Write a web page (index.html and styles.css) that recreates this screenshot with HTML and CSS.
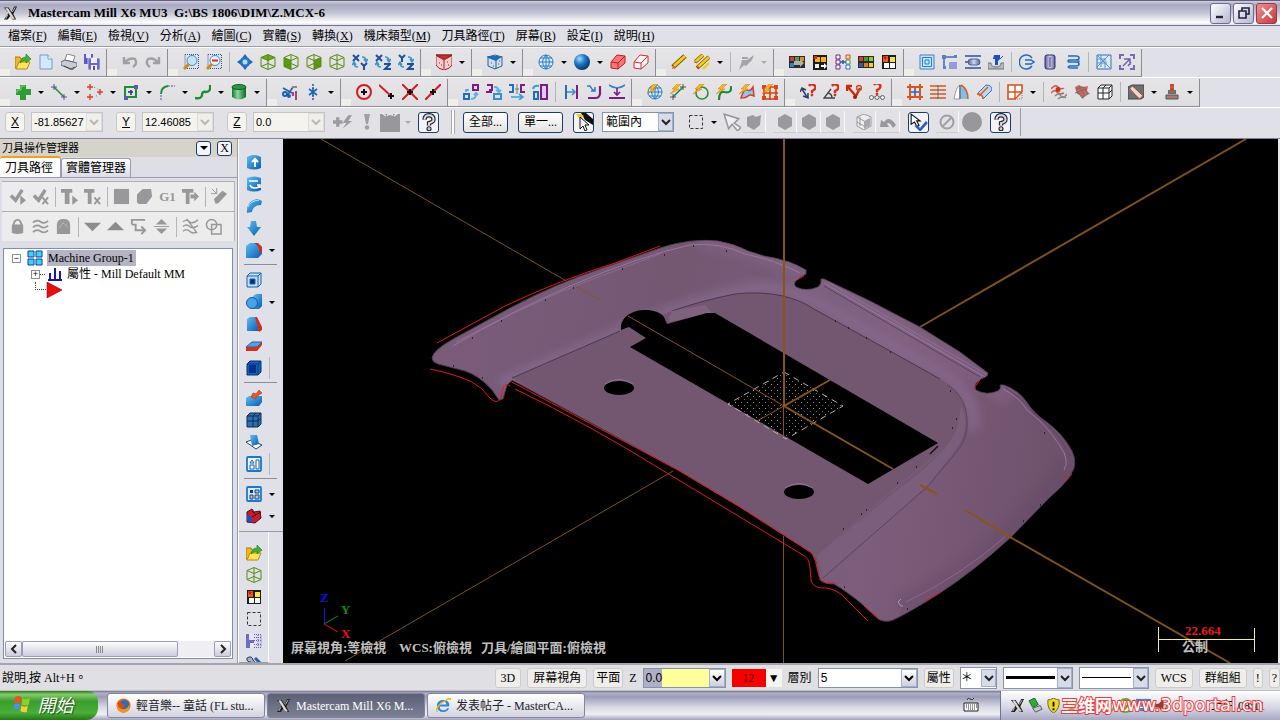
FILE: index.html
```html
<!DOCTYPE html>
<html lang="zh-Hant">
<head>
  <meta charset="UTF-8" />
  <title>Mastercam Mill X6 MU3</title>
  <link rel="stylesheet" href="styles.css">
</head>
<body>
  <!-- Icon sprite -->
  <svg class="sprite" width="0" height="0" aria-hidden="true">
    <defs>
      <linearGradient id="gBlue" x1="0" y1="0" x2="1" y2="1"><stop offset="0" stop-color="#5cc0f4"/><stop offset="1" stop-color="#0a5ab0"/></linearGradient>
      <linearGradient id="gGreen" x1="0" y1="0" x2="1" y2="0"><stop offset="0" stop-color="#127a2c"/><stop offset=".4" stop-color="#8fd4a0"/><stop offset="1" stop-color="#0c6a24"/></linearGradient>
      <radialGradient id="gBall" cx=".35" cy=".3" r=".7"><stop offset="0" stop-color="#a8d8ff"/><stop offset=".5" stop-color="#1e78c8"/><stop offset="1" stop-color="#06386e"/></radialGradient>
      <linearGradient id="gMauve" x1="0" y1="0" x2="1" y2="0"><stop offset="0" stop-color="#5a5a96"/><stop offset=".5" stop-color="#d4d4f0"/><stop offset="1" stop-color="#5a5a96"/></linearGradient>
    </defs>
    <symbol id="logo" viewBox="0 0 16 16"><path d="M1 2h5l3 5 3-6h3l-4 8 3 6h-4l-2-4-3 4H1l5-7z" fill="#1c1c1c"/><path d="M3 3h2l7 11h-2zM13 2l-3 5M5 10l-2 4" stroke="#c8c8b4" stroke-width="1" fill="#eee"/></symbol>
    <symbol id="open" viewBox="0 0 16 16"><path d="M0 3h5l1 2h6v9H0z" fill="#f0b820" stroke="#a87808"/><path d="M1 15l3-7h11l-3 7z" fill="#ffe45c" stroke="#b88a10"/><path d="M5 9q1-6 6-6V0l5 5-5 4V6Q8 6 5 9z" fill="#3cb43c" stroke="#187818" stroke-width=".6"/></symbol>
    <symbol id="new" viewBox="0 0 16 16"><path d="M2 1h8l4 4v10H2z" fill="#d4e8fc" stroke="#6c9cd4"/><path d="M10 1v4h4" fill="#fff" stroke="#6c9cd4"/></symbol>
    <symbol id="print" viewBox="0 0 16 16"><path d="M6 0l8 2-2 6-8-2z" fill="#fff" stroke="#888"/><path d="M0 8l4-2 12 3v3l-5 4-11-5z" fill="#c8ccd4" stroke="#667"/><path d="M3 12l7 3 4-2" stroke="#445" fill="none"/></symbol>
    <symbol id="saveall" viewBox="0 0 16 16"><path d="M0 0h9v10H0z" fill="#5c5cc0"/><path d="M2 0h5v4H2z" fill="#e8e8ff"/><path d="M4 4h12v12H4z" fill="#6a6acc" stroke="#e4e4f4" stroke-width=".7"/><path d="M7 4h6v5H7zM7 11h6v5H7z" fill="#f0f0ff"/><path d="M9 12h2v4H9z" fill="#5050a8"/></symbol>
    <symbol id="undo" viewBox="0 0 16 16"><path d="M2 3v6h6M3 8q5-5 10-3 3 5-2 8" fill="none" stroke="#a0a0a4" stroke-width="2.400"/></symbol>
    <symbol id="redo" viewBox="0 0 16 16"><path d="M14 3v6H8M13 8Q8 3 3 5q-3 5 2 8" fill="none" stroke="#a0a0a4" stroke-width="2.400"/></symbol>
    <symbol id="zoomwin" viewBox="0 0 16 16"><path d="M2 .5h13.500v14H2z" fill="none" stroke="#3050a0" stroke-dasharray="1 1"/><circle cx="9" cy="6.500" r="5" fill="#bfe4fa" stroke="#4a86c0"/><path d="M6 10l-5 5" stroke="#d08c10" stroke-width="3"/></symbol>
    <symbol id="zoomout" viewBox="0 0 16 16"><path d="M2 .5h13.500v14H2z" fill="none" stroke="#3050a0" stroke-dasharray="1 1"/><circle cx="9" cy="6.500" r="5" fill="#e4f0fa" stroke="#4a86c0"/><path d="M6 6.500h6" stroke="#e03010" stroke-width="2"/><path d="M6 10l-5 5" stroke="#d08c10" stroke-width="3"/></symbol>
    <symbol id="fit" viewBox="0 0 16 16"><path d="M8 0l3 4H5zM8 16l3-4H5zM0 8l4-3v6zM16 8l-4-3v6z" fill="#2468b8"/><path d="M4 4h8v8H4z" fill="#2a74c4"/><circle cx="8" cy="8" r="2.500" fill="#a8dcff"/></symbol>
    <symbol id="cube" viewBox="0 0 16 16"><path d="M8 .5l7 3v9l-7 3-7-3v-9zM1 3.500l7 3 7-3M8 6.500v9M8 1v6M1 12.500l7-3 7 3" fill="none" stroke="#5a8a14"/></symbol>
    <symbol id="cubetop" viewBox="0 0 16 16"><path d="M8 .5l7 3-7 3-7-3z" fill="#6aa81c"/><use href="#cube"/></symbol>
    <symbol id="cubefront" viewBox="0 0 16 16"><path d="M1 3.500l7 3v9l-7-3z" fill="#5a9a18"/><use href="#cube"/></symbol>
    <symbol id="cuberight" viewBox="0 0 16 16"><path d="M15 3.500l-7 3v9l7-3z" fill="#5a9a18"/><use href="#cube"/></symbol>
    <symbol id="axes" viewBox="0 0 16 16"><path d="M10 3q4 0 4 4M6 13q-4 0-4-4M12 5l2 3 2-3M0 11l2-3 2 3" fill="none" stroke="#3a94d4" stroke-width="1.500"/></symbol>
    <symbol id="xy" viewBox="0 0 16 16"><use href="#axes"/><path d="M1 1l6 6M7 1L1 7M9 9l3 3 3-3M12 12v4" stroke="#1c50a0" stroke-width="2" fill="none"/></symbol>
    <symbol id="xz" viewBox="0 0 16 16"><use href="#axes"/><path d="M1 1l6 6M7 1L1 7M9 10h6l-5 5h6" stroke="#1c50a0" stroke-width="2" fill="none"/></symbol>
    <symbol id="yz" viewBox="0 0 16 16"><use href="#axes"/><path d="M1 1l3 3 3-3M4 4v4M9 10h6l-5 5h6" stroke="#1c50a0" stroke-width="2" fill="none"/></symbol>
    <symbol id="redcube" viewBox="0 0 16 16"><path d="M0 1h16v10q-2 4-8 5-6-1-8-5z" fill="#f8cccc" stroke="#a02020"/><path d="M0 1h16l-8 4z" fill="#d42c2c" stroke="#8c1c1c"/><path d="M1 2l7 4 7-4M8 6v9M3 9h1M5 11h1M11 8h1M12 11h1" fill="none" stroke="#a02020"/></symbol>
    <symbol id="bluecube" viewBox="0 0 16 16"><path d="M1 3l7-2 7 2v9l-7 3-7-3z" fill="#cddff4" stroke="#345a8c"/><path d="M0 2h7l9 0-7 5-8-3z" fill="#1e6cb4"/><path d="M9 6v9M4 9h1M6 12h1M11 10h1M12 7h1" stroke="#345a8c"/></symbol>
    <symbol id="globe" viewBox="0 0 16 16"><circle cx="8" cy="8" r="7" fill="#d8ecfc" stroke="#2c7cc4"/><path d="M8 1v14M1 8h14M2 4h12M2 12h12M8 1Q1 8 8 15M8 1q7 7 0 14" fill="none" stroke="#2c7cc4"/></symbol>
    <symbol id="ball" viewBox="0 0 16 16"><circle cx="8" cy="8" r="8" fill="url(#gBall)"/></symbol>
    <symbol id="redsolid" viewBox="0 0 16 16"><path d="M1 8l6-7 8 1v7l-7 6-7-1zM1 8l7 1v6M8 9l7-7" fill="#f47878" stroke="#c01c1c"/></symbol>
    <symbol id="redwire" viewBox="0 0 16 16"><path d="M1 8l6-7 8 1v7l-7 6-7-1zM1 8l7 1v6M8 9l7-7" fill="#fff4f4" stroke="#d42c2c"/></symbol>
    <symbol id="pencil" viewBox="0 0 16 16"><path d="M2 13L14 2" stroke="#7c5c04" stroke-width="5"/><path d="M3 12L14 2" stroke="#f4cc1c" stroke-width="3"/><path d="M1 15l1-4 3 3z" fill="#e06848"/></symbol>
    <symbol id="pencils" viewBox="0 0 16 16"><path d="M1 8l8-7M3 14L15 3" stroke="#7c5c04" stroke-width="4"/><path d="M1 8l8-7M4 13L15 3M9 15l6-6" stroke="#f4cc1c" stroke-width="2.400"/><path d="M0 9l2-2 1 2zM3 15l1-3 2 2z" fill="#d84830"/></symbol>
    <symbol id="greytool" viewBox="0 0 16 16"><path d="M1 16l2-6 1-4h5l7-5-2 5-6 6-2-1z" fill="#a4a4a8"/><path d="M4 4h6" stroke="#a4a4a8" stroke-width="2"/></symbol>
    <symbol id="sw1" viewBox="0 0 16 16"><path d="M0 2h16v12H0z" fill="#2c2c2c"/><path d="M1 3h4v4H1z" fill="#d03c3c"/><path d="M6 3h4v4H6z" fill="#50a050"/><path d="M11 3h4v4h-4z" fill="#dc8c1c"/><path d="M1 9h4v4H1z" fill="#3080d0"/><path d="M5 7h6V5l4 4-4 4v-2H5z" fill="#b0b0a8"/></symbol>
    <symbol id="sw2" viewBox="0 0 16 16"><path d="M1 1h14v15H1z" fill="#1c1c1c"/><path d="M3 3h5v5H3zM9 3h5v5H9z" fill="#f4b41c"/><path d="M3 10h4v4H3z" fill="#f4f0e0"/><path d="M9 11h3V9l3 3-3 3v-2H9z" fill="#fff"/><path d="M2 2h3v3H2z" fill="#d82c1c"/></symbol>
    <symbol id="swap" viewBox="0 0 16 16"><path d="M1 1h4v4H1zM1 6h4v4H1zM1 11h4v4H1z" fill="#fff" stroke="#7c1c8c"/><path d="M11 1h4v4h-4z" fill="#f8dca0" stroke="#d04c1c"/><path d="M11 6h4v4h-4z" fill="#fff" stroke="#3c9c3c"/><path d="M11 11h4v4h-4z" fill="#fff" stroke="#2c6cc4"/><path d="M5 8h6M8 6v4" stroke="#1c60c0" stroke-width="1.500"/></symbol>
    <symbol id="sw3" viewBox="0 0 16 16"><path d="M0 2h16v12H0z" fill="#2c2c1c"/><path d="M1 3h4v4H1z" fill="#d83c2c"/><path d="M6 3h4v4H6z" fill="#3c9c3c"/><path d="M11 3h4v4h-4z" fill="#90c840"/><path d="M1 9h4v4H1z" fill="#3058c0"/><path d="M6 9h4v4H6z" fill="#e0801c"/><path d="M11 9h4v4h-4z" fill="#f0cc2c"/></symbol>
    <symbol id="sw4" viewBox="0 0 16 16"><path d="M1 1h14v14H1z" fill="#1c1c1c"/><path d="M9 3h5v5H9z" fill="#fce43c"/><path d="M3 9h5v5H3zM9 9h5v5H9z" fill="#fff"/><path d="M2 2h5v6H2z" fill="#e85c1c"/><path d="M2 2l4 1-2 3z" fill="#d01010"/></symbol>
    <symbol id="nest" viewBox="0 0 16 16"><path d="M1 1h14v14H1z" fill="#cce4fa" stroke="#4878c8"/><path d="M3.500 3.500h9v9h-9zM6 6h4v4H6z" fill="none" stroke="#1484d4"/></symbol>
    <symbol id="step" viewBox="0 0 16 16"><path d="M2 14V3h12" fill="none" stroke="#4c64c0" stroke-width="1.500"/><path d="M7 8h8v7H7z" fill="#9898dc"/><path d="M0 1h4v4H0zM12 1h3v3h-3zM1 12h3v3H1z" fill="#5c80c8"/></symbol>
    <symbol id="slotm" viewBox="0 0 16 16"><path d="M0 2h16M0 14h16M0 8h5" stroke="#2454a4" stroke-width="1.500"/><rect x="3" y="5" width="12" height="6" rx="3" fill="url(#gMauve)" stroke="#4464a4"/></symbol>
    <symbol id="drillm" viewBox="0 0 16 16"><path d="M0 9h3q0 4 5 4t5-4h3v6H0z" fill="#b8b8c0" stroke="#70707c"/><path d="M6 1h6v4l-2 2v4H7V5H5z" fill="#1c50c0"/><path d="M12 5l3-3" stroke="#1c50c0"/></symbol>
    <symbol id="circm" viewBox="0 0 16 16"><path d="M13 4a7 7 0 1 0 0 8M6 6h6l3 2-3 2H6" fill="none" stroke="#1c6cc8" stroke-width="1.500"/></symbol>
    <symbol id="cylm" viewBox="0 0 16 16"><rect x="3" y="1" width="10" height="14" rx="2" fill="url(#gMauve)" stroke="#303070"/><path d="M8 3v10" stroke="#40407c"/></symbol>
    <symbol id="helix" viewBox="0 0 16 16"><path d="M3 2h8q3 0 3 2t-3 2H4q-2 1 0 2h7q3 0 3 2t-3 2H4M4 6h7q3 0 3 2M4 12q-2 2 2 2h7" fill="none" stroke="#1c6cc8" stroke-width="1.600"/></symbol>
    <symbol id="netm" viewBox="0 0 16 16"><path d="M1 1h14v14H1z" fill="#d8ecfc" stroke="#2c74c0"/><path d="M1 1l14 14M1 5h8M1 9h10M5 1v12M9 5v9M1 13L13 1" stroke="#5c90cc" fill="none"/></symbol>
    <symbol id="expand" viewBox="0 0 16 16"><path d="M1 5V1h4M11 1h4v4M15 11v4h-4M5 15H1v-4" stroke="#7868c0" stroke-width="2" fill="none"/><path d="M5 5h6v6M4 12l7-7M9 12l3-4" stroke="#6c60b4" fill="none" stroke-width="1.400"/></symbol>

    <symbol id="plus" viewBox="0 0 16 16"><path d="M5 1h6v4h5v6h-5v5H5v-5H1V5h4z" fill="#2c9c34"/><path d="M6 2h4M6 2v4H2v3" stroke="#84d484" fill="none"/></symbol>
    <symbol id="line" viewBox="0 0 16 16"><path d="M3 3l10 10" stroke="#1c8c34" stroke-width="1.500"/><path d="M0 3h6M3 0v6M10 13h6M13 10v6" stroke="#5454a0"/></symbol>
    <symbol id="arc" viewBox="0 0 16 16"><path d="M3 3q9 0 9 5t-9 5" fill="none" stroke="#2c9c44" stroke-dasharray="1 3"/><path d="M0 3h6M3 0v6M10 8h6M13 5v6M0 13h6M3 10v6" stroke="#e03c2c" stroke-width="1.400"/></symbol>
    <symbol id="rect" viewBox="0 0 16 16"><path d="M2 3h11v10H2z" fill="none" stroke="#189030" stroke-width="2"/><path d="M11 1h4v4h-4zM1 12h4v4H1z" fill="#5c5cac"/><path d="M5 8h5M8 6v5" stroke="#30306c" stroke-width="1.500"/></symbol>
    <symbol id="fillet" viewBox="0 0 16 16"><path d="M2 16v-6" stroke="#5454a0" stroke-dasharray="2 1"/><path d="M2 10Q2 3 9 2" fill="none" stroke="#189030" stroke-width="2"/><path d="M9 2h7" stroke="#5454a0" stroke-dasharray="2 1"/></symbol>
    <symbol id="spline" viewBox="0 0 16 16"><path d="M0 14q7 1 7-3t4-3q5 0 4-7" fill="none" stroke="#189030" stroke-width="2.400"/></symbol>
    <symbol id="cyl" viewBox="0 0 16 16"><path d="M1 3h14v10q-7 5-14 0z" fill="url(#gGreen)"/><ellipse cx="8" cy="3" rx="7" ry="2.500" fill="#289844" stroke="#0c6020"/></symbol>
    <symbol id="trim" viewBox="0 0 16 16"><path d="M1 4l9 5M5 12l6-9" stroke="#1c60b4" stroke-width="1.600"/><circle cx="3" cy="10" r="2" fill="none" stroke="#1c60b4" stroke-width="2"/><circle cx="7" cy="12" r="2" fill="#1c60b4"/><path d="M10 3h5" stroke="#888" stroke-width="2"/><path d="M14 7v9M11 8v4" stroke="#8c2060" stroke-width="1.600"/></symbol>
    <symbol id="break" viewBox="0 0 16 16"><path d="M8 0v5M8 11v5" stroke="#4454b0" stroke-dasharray="2 1" stroke-width="1.600"/><path d="M8 4v8M4 5l8 6M12 5l-8 6" stroke="#1c64bc" stroke-width="1.600"/></symbol>
    <symbol id="snapc" viewBox="0 0 16 16"><circle cx="8" cy="8" r="7" fill="none" stroke="#d01c24" stroke-width="2"/><path d="M8 5v6M5 8h6" stroke="#111" stroke-width="2"/></symbol>
    <symbol id="snape" viewBox="0 0 16 16"><path d="M0 1l12 11" stroke="#d01c24" stroke-width="2"/><path d="M12 9v6M9 12h6" stroke="#111" stroke-width="2"/></symbol>
    <symbol id="snapx" viewBox="0 0 16 16"><path d="M0 0l16 16M16 0L0 16" stroke="#d01c24" stroke-width="2"/><path d="M8 5v6M5 8h6" stroke="#111" stroke-width="2"/></symbol>
    <symbol id="snapm" viewBox="0 0 16 16"><path d="M16 0L0 16" stroke="#d01c24" stroke-width="2"/><path d="M8 5v6M5 8h6" stroke="#111" stroke-width="2"/></symbol>
    <symbol id="xf1" viewBox="0 0 16 16"><path d="M10 1h5v5h-5z" fill="none" stroke="#7c1c84" stroke-width="2"/><path d="M1 10h5v5H1z" fill="none" stroke="#1c70c4" stroke-width="2"/><path d="M8 15q5 0 5-5M11 11l2-2 2 2M6 6H3v2" stroke="#58b0e8" stroke-width="1.800" fill="none"/></symbol>
    <symbol id="xf2" viewBox="0 0 16 16"><path d="M1 1h5v5H3M0 8h6" fill="none" stroke="#7c1c84" stroke-width="2"/><path d="M8 10h7v5H8z" fill="none" stroke="#3c8cd0" stroke-width="2"/><path d="M8 3q5 0 5 5M10 6l3 2 2-2" stroke="#58b0e8" stroke-width="1.800" fill="none"/></symbol>
    <symbol id="xf3" viewBox="0 0 16 16"><path d="M0 1h4v7H0" fill="none" stroke="#1c70c4" stroke-width="2"/><path d="M16 1h-4v7h4" fill="none" stroke="#7c1c84" stroke-width="2"/><path d="M8 0v10M6 5h4" stroke="#777"/><path d="M2 13h11M10 10l4 3-4 3" stroke="#3c9ce0" stroke-width="1.600" fill="none"/></symbol>
    <symbol id="xf4" viewBox="0 0 16 16"><path d="M9 1h6v14H9z" fill="#e4c8f0" stroke="#7c1c84" stroke-width="2"/><path d="M2 8h4v7H2z" fill="none" stroke="#1c70c4" stroke-width="2"/><path d="M1 5q1-4 6-3" stroke="#3c9ce0" stroke-width="2" fill="none"/></symbol>
    <symbol id="xf5" viewBox="0 0 16 16"><path d="M3 1v14" stroke="#1c70c4" stroke-width="2"/><path d="M14 1v14" stroke="#7c1c84" stroke-width="2"/><path d="M4 8h8M9 5l3 3-3 3" stroke="#3c8cd0" fill="none" stroke-width="1.500"/></symbol>
    <symbol id="xf6" viewBox="0 0 16 16"><path d="M1 2h3q2 4 5 5M9 3v4H5" stroke="#2c80cc" stroke-width="1.500" fill="none"/><path d="M14 2v8q-1 4-4 4H2" stroke="#7c1c84" stroke-width="2.200" fill="none"/></symbol>
    <symbol id="xf7" viewBox="0 0 16 16"><path d="M0 1q8 6 16 0" fill="none" stroke="#2c80cc" stroke-width="1.600"/><path d="M8 4v6M5 8l3 3 3-3" stroke="#7c1c84" stroke-width="1.600" fill="none"/><path d="M0 14h16" stroke="#7c1c84" stroke-width="2"/></symbol>
    <symbol id="bolt" viewBox="0 0 16 16"><path d="M7 0L2 5h3L0 10l9-5H6l5-5z" fill="#f8b41c" stroke="#d0780c" stroke-width=".5"/></symbol>
    <symbol id="dgl" viewBox="0 0 16 16"><use href="#globe"/><use href="#bolt"/></symbol>
    <symbol id="dln" viewBox="0 0 16 16"><path d="M3 13L13 3" stroke="#1c8c34" stroke-width="1.600"/><path d="M10 3h6M13 0v6M0 13h6M3 10v6" stroke="#555"/><use href="#bolt"/></symbol>
    <symbol id="dci" viewBox="0 0 16 16"><circle cx="9" cy="9" r="6" fill="none" stroke="#2c8c3c" stroke-width="1.600"/><use href="#bolt"/></symbol>
    <symbol id="dsp" viewBox="0 0 16 16"><path d="M3 16q0-9 5-8 8 2 7-6" fill="none" stroke="#1c8c34" stroke-width="2.200"/><use href="#bolt"/></symbol>
    <symbol id="dsu" viewBox="0 0 16 16"><path d="M2 14q3-10 6-8t6-3l1 9q-4-2-6 0t-7 2z" fill="#8cc8f0" stroke="#d0402c" stroke-width="1.500"/><use href="#bolt"/></symbol>
    <symbol id="dgr" viewBox="0 0 16 16"><path d="M2 3h12v12H2zM8 2v14M1 9h15" fill="#f8e0d0" stroke="#d0401c" stroke-width="1.600"/><path d="M0 1h4v4H0zM12 1h4v4h-4zM0 12h4v4H0zM12 12h4v4h-4z" fill="#d8481c"/><use href="#bolt"/></symbol>
    <symbol id="q" viewBox="0 0 16 16"><path d="M7 3q2-3 5-1t0 5l-2 1v2" fill="none" stroke="#d83018" stroke-width="2.400"/><circle cx="10" cy="12" r="1.400" fill="#d83018"/></symbol>
    <symbol id="q1" viewBox="0 0 16 16"><path d="M2 5l5 8M0 8l2-4 4 2M3 12l5 2V9" stroke="#2c4068" stroke-width="1.500" fill="none"/><use href="#q" x="2" y="-1"/></symbol>
    <symbol id="q2" viewBox="0 0 16 16"><path d="M8 5l-7 9h11M5 9q4 1 4 5" stroke="#444" stroke-width="1.400" fill="none"/><use href="#q" x="2" y="-1"/></symbol>
    <symbol id="q3" viewBox="0 0 16 16"><path d="M1 7V2h5M1 2l8 9M9 14L14 4" stroke="#c82c10" stroke-width="2.400" fill="none"/><circle cx="9" cy="13" r="2" fill="#a81c08"/><circle cx="13" cy="4" r="2.400" fill="none" stroke="#d84824" stroke-width="1.500"/></symbol>
    <symbol id="q4" viewBox="0 0 16 16"><use href="#q" x="-2" y="-2"/><path d="M3 13h10" stroke="#777"/><circle cx="2.500" cy="13.500" r="2" fill="#eee" stroke="#666"/><circle cx="8" cy="13.500" r="2" fill="#eee" stroke="#666"/><circle cx="13.500" cy="13.500" r="2" fill="#eee" stroke="#666"/></symbol>
    <symbol id="og1" viewBox="0 0 16 16"><path d="M8 3v10M3 8h10" stroke="#3464b4" stroke-width="1.600"/><path d="M3 0v16M13 0v16M0 3h16M0 13h16" stroke="#dc541c" stroke-width="2"/></symbol>
    <symbol id="og2" viewBox="0 0 16 16"><path d="M0 2h16M0 6h16M0 10h16M0 14h16" stroke="#dc541c" stroke-width="1.600"/><path d="M8 1v14" stroke="#666"/></symbol>
    <symbol id="og3" viewBox="0 0 16 16"><path d="M1 15Q3 3 7 1v14z" fill="#fff" stroke="#999"/><path d="M8 1q7 4 7 14H8z" fill="#7cc0ec"/><path d="M8 1q7 4 7 14" fill="none" stroke="#e05c1c" stroke-width="1.500"/><path d="M7 1v14" stroke="#444"/></symbol>
    <symbol id="og4" viewBox="0 0 16 16"><path d="M1 10l9-9q6 0 6 5l-9 9q0-5-6-5z" fill="#b8d8f4" stroke="#3c70b0"/><path d="M1 10q6 0 6 5M3 12l9-9" fill="none" stroke="#e05c1c" stroke-width="1.500"/></symbol>
    <symbol id="og5" viewBox="0 0 16 16"><path d="M9 15H1V1h14v7" fill="#fff" stroke="#d8501c" stroke-width="1.600"/><path d="M8 1v14M1 8h14M8 15l7-7" stroke="#d8501c" stroke-width="1.400"/><path d="M10 15h5V9" fill="none" stroke="#888" stroke-dasharray="1 1"/></symbol>
    <symbol id="mc1" viewBox="0 0 16 16"><path d="M0 5q4-5 7-2t6 1M0 9q4-4 6-1t7 1" fill="none" stroke="#c4604c" stroke-width="1.500"/><circle cx="7" cy="5.500" r="2.500" fill="#d42c1c"/><path d="M4 12q4-4 6 0t6-2M7 15q4-4 8-1" fill="none" stroke="#888" stroke-width="1.500"/></symbol>
    <symbol id="mc2" viewBox="0 0 16 16"><path d="M1 3l4-2 4 2 5-1-1 5 3 3-5 1-2 4-3-4-3-1z" fill="#c8685c"/><path d="M2 5l8-2 4 7-6 4zM5 2l6 10M1 9l11-4" fill="none" stroke="#7c6c6c"/></symbol>
    <symbol id="wirebox" viewBox="0 0 16 16"><path d="M1 4l3-3h11v11l-3 3H1zM1 4h11v11M12 4l3-3M6 4v11M1 9h11M6 4l3-3M12 9l3-3" fill="#fff" stroke="#222"/></symbol>
    <symbol id="rot" viewBox="0 0 16 16"><path d="M0 3l4-2h12v12l-3 2H0z" fill="#6c7070" stroke="#444"/><path d="M3 4l10 9" stroke="#f0d8d0" stroke-width="4"/><path d="M2 5l9 10M5 2l9 9" stroke="#c83c2c"/></symbol>
    <symbol id="mill" viewBox="0 0 16 16"><path d="M6 0h4v6H6z" fill="#c44838"/><path d="M4 6h8v4H4z" fill="#6c6868"/><path d="M2 11h12v4H2z" fill="#888" stroke="#555"/><path d="M6 3h4M5 8h6M4 13h8" stroke="#e06048"/></symbol>

    <symbol id="boltg" viewBox="0 0 22 16"><path d="M0 8h10M5 3v10" stroke="#9c9ca0" stroke-width="3.500"/><path d="M16 1l-6 8h4l-4 6 10-8h-4l4-6z" fill="#9c9ca0"/></symbol>
    <symbol id="bang" viewBox="0 0 16 16"><path d="M5 0h6L9 10H7z" fill="#a0a0a4"/><circle cx="8" cy="13.500" r="2.200" fill="#a0a0a4"/></symbol>
    <symbol id="clock" viewBox="0 0 20 20"><path d="M0 2h20v18H0z" fill="#98989c"/><path d="M2 1l4 3M18 1l-4 3" stroke="#eee" stroke-width="1.500"/><path d="M7 0h6v4l-3-1-3 1z" fill="#e2e2e6"/></symbol>
    <symbol id="help" viewBox="0 0 16 16"><path d="M4 6q0-4 4-4t4 4q0 2-4 3v2" fill="none" stroke="#26262e" stroke-width="3.800"/><path d="M4 6q0-4 4-4t4 4q0 2-4 3v2" fill="none" stroke="#d8dce8" stroke-width="1.800"/><circle cx="8" cy="14" r="1.800" fill="#c8ccd8" stroke="#26262e"/></symbol>
    <symbol id="bcursor" viewBox="0 0 18 18"><path d="M6 0l5 0 7 6v6l-8-5z" fill="#111"/><path d="M1 1h5l3 2-4 3z" fill="#f4c41c"/><path d="M5 4v12l3-3 2 5 2-1-2-5h4z" fill="#fff" stroke="#111"/></symbol>
    <symbol id="dash" viewBox="0 0 16 16"><path d="M1.500 1.500h13v13h-13z" fill="none" stroke="#333" stroke-dasharray="3 2"/></symbol>
    <symbol id="gcur" viewBox="0 0 16 16"><path d="M1 1l4 13 3-4 5 6 3-3-6-4 4-4z" fill="#f0f0f0" stroke="#98989c" stroke-width="1.400"/></symbol>
    <symbol id="gcube" viewBox="0 0 16 16"><path d="M1 3l6-2 3 2 5-2-1 10-6 5-7-4z" fill="#9a9a9e"/></symbol>
    <symbol id="ghex" viewBox="0 0 16 16"><path d="M8 0l7 4v8l-7 4-7-4V4z" fill="#9a9a9e"/></symbol>
    <symbol id="gwire" viewBox="0 0 16 16"><path d="M8 0l7 3v9l-7 4-7-4V3z" fill="#eee" stroke="#9a9a9e"/><path d="M8 7l6-3v8l-6 3z" fill="#a8a8ac"/><path d="M1 3l7 4M4 3v9M1 8l7 4" stroke="#9a9a9e" fill="none"/></symbol>
    <symbol id="gup" viewBox="0 0 16 16"><path d="M0 13l1-7 3 2q5-7 12 3l-3 3q-4-7-6-4l2 3z" fill="#98989c"/></symbol>
    <symbol id="vcur" viewBox="0 0 16 16"><path d="M1 1v9l3-2 2 4 2-1-2-4h3z" fill="#fff" stroke="#111"/><path d="M5 11l4 4 6-7" fill="none" stroke="#2c60c4" stroke-width="2.400"/></symbol>
    <symbol id="gno" viewBox="0 0 16 16"><circle cx="8" cy="8" r="6.500" fill="none" stroke="#a0a0a4" stroke-width="2"/><path d="M3 13L13 3" stroke="#a0a0a4" stroke-width="2"/></symbol>
    <symbol id="gdot" viewBox="0 0 20 20"><circle cx="10" cy="10" r="10" fill="#98989c"/></symbol>

    <symbol id="ck" viewBox="0 0 18 18"><path d="M2 8l5 5 7-11" fill="none" stroke="#98989a" stroke-width="3.600"/><path d="M12 8l6 5-6 5z" fill="#98989a"/></symbol>
    <symbol id="ckx" viewBox="0 0 18 18"><path d="M2 8l5 5 7-11" fill="none" stroke="#98989a" stroke-width="3.600"/><path d="M11 10l6 7M17 10l-6 7" stroke="#98989a" stroke-width="2"/></symbol>
    <symbol id="tp" viewBox="0 0 18 18"><path d="M0 1h12v4H9v12H4V5H0z" fill="#98989a"/><path d="M12 8l6 5-6 5z" fill="#98989a"/></symbol>
    <symbol id="tx" viewBox="0 0 18 18"><path d="M0 1h11v4H8v12H4V5H0z" fill="#98989a"/><path d="M11 10l6 7M17 10l-6 7" stroke="#98989a" stroke-width="2"/></symbol>
    <symbol id="sq" viewBox="0 0 18 18"><path d="M1 1h16v16H1z" fill="#98989a"/></symbol>
    <symbol id="blob" viewBox="0 0 18 18"><path d="M1 7l6-6h9l1 8-6 8H3l-2-2z" fill="#98989a"/></symbol>
    <symbol id="ta" viewBox="0 0 18 18"><path d="M0 1h12v4H8v12H4V5H0zM9 7h4V4l5 5-5 5v-3H9z" fill="#98989a"/></symbol>
    <symbol id="magic" viewBox="0 0 18 18"><path d="M3 12l9-9 5 3-9 10-3 1z" fill="#98989a"/><path d="M1 1l5 5M6 0v6M0 6h6" stroke="#98989a"/></symbol>
    <symbol id="lock" viewBox="0 0 18 18"><path d="M3 7h12v9q-6 2-12 0z" fill="#98989a"/><path d="M5 8q0-6 4-6t4 6" fill="none" stroke="#98989a" stroke-width="2"/></symbol>
    <symbol id="waves" viewBox="0 0 18 18"><path d="M1 5q4-4 8-1t8-1M1 10q4-4 8-1t8-1M1 15q4-4 8-1t8-1" fill="none" stroke="#98989a" stroke-width="1.800"/></symbol>
    <symbol id="lock2" viewBox="0 0 18 18"><path d="M2 17V7q0-6 7-6t7 6v10z" fill="#98989a"/><path d="M5 10q4-9 8 0" fill="none" stroke="#ddd" stroke-dasharray="1 1"/></symbol>
    <symbol id="dn" viewBox="0 0 18 18"><path d="M0 5h18l-9 9z" fill="#8c8c8e"/></symbol>
    <symbol id="up" viewBox="0 0 18 18"><path d="M0 13h18L9 4z" fill="#8c8c8e"/></symbol>
    <symbol id="loop" viewBox="0 0 18 18"><path d="M2 7V2h14M2 7h4v6h10M12 9l4 4-4 4" fill="none" stroke="#98989a" stroke-width="2"/></symbol>
    <symbol id="ud" viewBox="0 0 18 18"><path d="M3 7l6-6 6 6zM3 11l6 6 6-6z" fill="#98989a"/><path d="M1 9h16" stroke="#98989a"/></symbol>
    <symbol id="wavex" viewBox="0 0 18 18"><path d="M1 4q4-3 7 0t9-2M1 9q4-3 7 0t9-1M1 14q4-3 7 0t8 1M5 1l11 15" fill="none" stroke="#98989a" stroke-width="1.500"/></symbol>
    <symbol id="rings" viewBox="0 0 18 18"><circle cx="7" cy="7" r="5.500" fill="none" stroke="#98989a" stroke-width="1.600"/><path d="M7 7h10v10H7z" fill="none" stroke="#98989a" stroke-width="1.600"/></symbol>

    <symbol id="s1" viewBox="0 0 16 16"><path d="M1 3q7-4 14 0v11q-7 3-14 0z" fill="url(#gBlue)"/><path d="M9 13V5M6 8l3-3 3 3" stroke="#fff" stroke-width="2" fill="none"/></symbol>
    <symbol id="s2" viewBox="0 0 16 16"><path d="M1 2q7-3 14 0v12q-7 3-14 0z" fill="url(#gBlue)"/><path d="M3 5h9M4 9q1 3 5 3t5-3M11 9h3v3" stroke="#fff" stroke-width="1.500" fill="none"/></symbol>
    <symbol id="s3" viewBox="0 0 16 16"><path d="M1 15Q0 2 12 1l4 2-1 4q-8 0-9 7z" fill="url(#gBlue)"/><path d="M2 9Q4 3 13 2" stroke="#b4e4fc" fill="none"/></symbol>
    <symbol id="s4" viewBox="0 0 16 16"><path d="M5 1h5l1 6h4l-7 9-7-9h3z" fill="url(#gBlue)"/></symbol>
    <symbol id="s5" viewBox="0 0 16 16"><path d="M0 4l4-3h7l5 4v7l-4 4H0z" fill="url(#gBlue)"/><path d="M8 1h4l4 4v6l-3-1q1-6-5-9z" fill="#d42c1c"/></symbol>
    <symbol id="s6" viewBox="0 0 16 16"><path d="M1 4l3-3h11v11l-3 3H1zM1 4h11v11M12 4l3-3" fill="#c4e0f8" stroke="#1460b0"/><path d="M4 7h5v5H4z" fill="#0c2c74" stroke="#1460b0"/></symbol>
    <symbol id="s7" viewBox="0 0 16 16"><path d="M7 2l3-2h6v12l-3 3H7z" fill="url(#gBlue)"/><circle cx="6" cy="9" r="5.500" fill="#48a4e8" stroke="#1258a8"/></symbol>
    <symbol id="s8" viewBox="0 0 16 16"><path d="M1 3l3-2h6l3 14H1z" fill="url(#gBlue)"/><path d="M9 1h2l5 10v3l-3 2z" fill="#d42c1c"/></symbol>
    <symbol id="s9" viewBox="0 0 16 16"><path d="M0 9l6-5h10l-5 5z" fill="#4ca4e8" stroke="#1c60b0"/><path d="M0 9h11v4H0zM11 9l5-5v3l-5 6z" fill="#d4301c"/></symbol>
    <symbol id="s10" viewBox="0 0 16 16"><path d="M1 4l3-3h11v11l-3 3H1z" fill="#1460b4" stroke="#083468"/><path d="M3 5h7v8H3z" fill="#0c2c94"/><path d="M1 4h11v11M12 4l3-3" fill="none" stroke="#0a3c7c"/></symbol>
    <symbol id="s11" viewBox="0 0 16 16"><path d="M0 8l3-2h13v6l-3 4H0z" fill="url(#gBlue)"/><path d="M5 7l2-4 3 1 3-4 3 3-6 4v2z" fill="#e8582c" stroke="#a83410" stroke-width=".6"/></symbol>
    <symbol id="s12" viewBox="0 0 16 16"><path d="M1 4l3-3h11v11l-3 3H1z" fill="#2c70b0" stroke="#0c2c54"/><path d="M1 4h11v11M12 4l3-3M7 4v11M1 9h11M7 4l3-3M12 9l3-3" fill="none" stroke="#0c2c54"/></symbol>
    <symbol id="s13" viewBox="0 0 16 16"><path d="M0 8l5-2 11 5-6 4z" fill="#fff" stroke="#345"/><path d="M4 1h7l2 9-7 2z" fill="url(#gBlue)"/></symbol>
    <symbol id="s14" viewBox="0 0 16 16"><rect x="1" y="1" width="14" height="14" rx="1" fill="#e8f4ff" stroke="#1c78c8" stroke-width="1.800"/><path d="M4 7l2-3 2 3zM4 9h4v4H4zM10 4h3v9h-3z" fill="#fff" stroke="#1c60a8"/></symbol>
    <symbol id="s15" viewBox="0 0 16 16"><rect x="1" y="1" width="14" height="14" rx="1" fill="#d4ecfc" stroke="#1c78c8" stroke-width="1.800"/><path d="M4 4h3v3H4z" fill="#103878"/><path d="M9 4h4v3H9zM4 9h3v4H4zM9 9h4v4H9z" fill="#a8c8e8" stroke="#1c4078"/></symbol>
    <symbol id="s16" viewBox="0 0 16 16"><path d="M1 4l5-3 2 3 6-1 1 7-6 5-8-1z" fill="#c81c2c" stroke="#500c18"/><path d="M1 7l5 2v6l-5-2z" fill="#1c50b4"/><path d="M6 9l9-5M6 3l4 4" stroke="#400810"/></symbol>
    <symbol id="half" viewBox="0 0 16 16"><path d="M0 1h8v14H0z" fill="#6c6cc0"/><path d="M3 1h5v6H3zM4 10h4v5H4z" fill="#e4e4fc"/><path d="M8 1.500h7v13H8M12 2v12M8 7.500h7M8 4.500h7M8 11.500h7" fill="none" stroke="#5c5cac" stroke-dasharray="1 1"/></symbol>
    <symbol id="wr" viewBox="0 0 16 16"><path d="M1 3q5-3 6 2l7 8-2 2-7-8q-5 0-4-4z" fill="#a4b4c8" stroke="#334"/><path d="M9 3l6 6" stroke="#1c60b0" stroke-width="3"/></symbol>

    <symbol id="tgroup" viewBox="0 0 16 16"><path d="M1 1h6v6H1zM9 1h6v6H9zM1 9h6v6H1zM9 9h6v6H9z" fill="#3cd4f8" stroke="#103c9c"/></symbol>
    <symbol id="tprop" viewBox="0 0 16 16"><path d="M1 14h14M3 13V7M8 13V2M13 13V5" stroke="#1418b0" stroke-width="2"/></symbol>
    <symbol id="tplay" viewBox="0 0 16 16"><path d="M1 0l15 8-15 8z" fill="#e80c0c" stroke="#8c0808" stroke-width=".6"/></symbol>
    <symbol id="chev" viewBox="0 0 10 10"><path d="M1 3l4 4 4-4" fill="none" stroke="currentColor" stroke-width="2"/></symbol>
    <symbol id="lt" viewBox="0 0 10 10"><path d="M7 1L3 5l4 4" fill="none" stroke="#222" stroke-width="2"/></symbol>
    <symbol id="gt" viewBox="0 0 10 10"><path d="M3 1l4 4-4 4" fill="none" stroke="#222" stroke-width="2"/></symbol>
    <symbol id="min" viewBox="0 0 16 16"><path d="M3 12h7" stroke="#1c2440" stroke-width="2.400"/></symbol>
    <symbol id="max" viewBox="0 0 16 16"><path d="M6 6V3h7v6h-3M3 6h7v7H3z" fill="none" stroke="#1c2440" stroke-width="1.600"/></symbol>
    <symbol id="close" viewBox="0 0 16 16"><path d="M3 3l10 10M13 3L3 13" stroke="#fff" stroke-width="2.200"/></symbol>
    <symbol id="flag" viewBox="0 0 18 18"><path d="M2 3q3-2 6 0L7 9Q4 7 1 9z" fill="#e85420"/><path d="M9 4q3 2 7 0l-1 6q-3 2-7 0z" fill="#8cd030"/><path d="M1 10q3-2 6 0l-1 5q-3-2-6 0z" fill="#4c90f0"/><path d="M8 11q3 2 6 0l-1 6q-3 1-6-1z" fill="#fccc28"/></symbol>
    <symbol id="fox" viewBox="0 0 16 16"><circle cx="8" cy="8" r="7.500" fill="#e8681c"/><circle cx="9" cy="7" r="5" fill="#2c6cb8"/><path d="M1 5q1 8 8 7 4-1 5-5 2 8-6 9-8-1-7-11z" fill="#f4941c"/><path d="M2 4q4 0 5 3l3 1-3 3q-5 0-5-7z" fill="#d84c14"/></symbol>
    <symbol id="ie" viewBox="0 0 16 16"><path d="M14 9H4q0 4 4 4 3 0 4-2h2q-2 4-6 4-7 0-7-7 0-6 7-6t6 7zM4 7h7q0-3-3-3T4 7z" fill="#2c88dc" fill-rule="evenodd"/><path d="M1 15Q-1 10 8 4t7-2" fill="none" stroke="#f0b420" stroke-width="1.500"/></symbol>
    <symbol id="kbd" viewBox="0 0 16 16"><path d="M4 3q1-3 3-1t4-1M1 6h14v8H1z" fill="#fff" stroke="#222"/><path d="M3 8h11M3 10h11M5 12h7" stroke="#222" stroke-dasharray="1 1"/></symbol>
    <symbol id="pc" viewBox="0 0 16 16"><path d="M1 3l6-3 4 7-6 3z" fill="#34a83c" stroke="#1c6c24"/><path d="M5 11l8-3 2 4-7 3z" fill="#c4c8cc" stroke="#556"/></symbol>
    <symbol id="shield" viewBox="0 0 16 16"><path d="M8 0q3 2 6 2 1 10-6 14Q1 12 2 2q3 0 6-2z" fill="#f4d818" stroke="#60604c"/><path d="M8 4v5M8 11v2" stroke="#111" stroke-width="2"/></symbol>
    <symbol id="person" viewBox="0 0 16 16"><circle cx="8" cy="6" r="5" fill="#f8ecd8" stroke="#c08040"/><path d="M2 15q6-8 12 0z" fill="#e89030"/></symbol>
    <symbol id="leaf" viewBox="0 0 16 16"><circle cx="8" cy="8" r="7" fill="#f4fce8" stroke="#64a82c" stroke-width="2"/><path d="M5 8l3 3 4-6" stroke="#4c9c1c" stroke-width="2" fill="none"/></symbol>
    <symbol id="net" viewBox="0 0 16 16"><path d="M0 1h16v13H0z" fill="#3c84d4"/><path d="M2 8q6-9 12 0M4 10h8" stroke="#fff" fill="none" stroke-width="1.500"/></symbol>
    <symbol id="vol" viewBox="0 0 16 16"><path d="M1 6h4l5-5v14l-5-5H1z" fill="#8c3c30"/><path d="M12 4q3 4 0 8" fill="none" stroke="#555"/></symbol>
  </svg>

  <header class="titlebar">
    <svg class="i"><use href="#logo"/></svg>
    <h1>Mastercam Mill X6 MU3  G:\BS 1806\DIM\Z.MCX-6</h1>
    <button class="win" aria-label="Minimize"><svg><use href="#min"/></svg></button>
    <button class="win" aria-label="Restore"><svg><use href="#max"/></svg></button>
    <button class="win win-close" aria-label="Close"><svg><use href="#close"/></svg></button>
  </header>

  <nav class="menubar">
    <a href="#">檔案(<u>F</u>)</a><a href="#">編輯(<u>E</u>)</a><a href="#">檢視(<u>V</u>)</a><a href="#">分析(<u>A</u>)</a><a href="#">繪圖(<u>C</u>)</a><a href="#">實體(<u>S</u>)</a><a href="#">轉換(<u>X</u>)</a><a href="#">機床類型(<u>M</u>)</a><a href="#">刀具路徑(<u>T</u>)</a><a href="#">屏幕(<u>R</u>)</a><a href="#">設定(<u>I</u>)</a><a href="#">說明(<u>H</u>)</a>
  </nav>

  <!-- Toolbar row 1: file, view, shading, toolpaths -->
  <div class="bar">
    <div class="group">
      <button class="tb" aria-label="Open"><svg><use href="#open"/></svg></button>
      <button class="tb" aria-label="New"><svg><use href="#new"/></svg></button>
      <button class="tb" aria-label="Print"><svg><use href="#print"/></svg></button>
      <button class="tb" aria-label="Save"><svg><use href="#saveall"/></svg></button>
    </div>
    <div class="group">
      <button class="tb" aria-label="Undo"><svg><use href="#undo"/></svg></button>
      <button class="tb" aria-label="Redo"><svg><use href="#redo"/></svg></button>
    </div>
    <div class="group">
      <button class="tb" aria-label="Zoom window"><svg><use href="#zoomwin"/></svg></button>
      <button class="tb" aria-label="Unzoom"><svg><use href="#zoomout"/></svg></button>
      <i class="sep"></i>
      <button class="tb" aria-label="Fit"><svg><use href="#fit"/></svg></button>
      <button class="tb" aria-label="Top view"><svg><use href="#cubetop"/></svg></button>
      <button class="tb" aria-label="Front view"><svg><use href="#cubefront"/></svg></button>
      <button class="tb" aria-label="Right view"><svg><use href="#cuberight"/></svg></button>
      <button class="tb" aria-label="Isometric view"><svg><use href="#cube"/></svg></button>
      <button class="tb" aria-label="XY"><svg><use href="#xy"/></svg></button>
      <button class="tb" aria-label="XZ"><svg><use href="#xz"/></svg></button>
      <button class="tb" aria-label="YZ"><svg><use href="#yz"/></svg></button>
    </div>
    <div class="group">
      <button class="tb" aria-label="Graphics view"><svg><use href="#redcube"/></svg></button><button class="arr" aria-label="More"></button>
    </div>
    <div class="group">
      <button class="tb" aria-label="Planes"><svg><use href="#bluecube"/></svg></button><button class="arr" aria-label="More"></button>
    </div>
    <div class="group">
      <button class="tb" aria-label="Wireframe"><svg><use href="#globe"/></svg></button><button class="arr" aria-label="More"></button>
      <button class="tb" aria-label="Shaded"><svg><use href="#ball"/></svg></button><button class="arr" aria-label="More"></button>
      <button class="tb" aria-label="Solid"><svg><use href="#redsolid"/></svg></button>
      <button class="tb" aria-label="Outline"><svg><use href="#redwire"/></svg></button>
    </div>
    <div class="group">
      <button class="tb" aria-label="Delete"><svg><use href="#pencil"/></svg></button>
      <button class="tb" aria-label="Delete duplicates"><svg><use href="#pencils"/></svg></button><button class="arr" aria-label="More"></button>
      <i class="sep"></i>
      <button class="tb" aria-label="Undelete"><svg><use href="#greytool"/></svg></button><button class="arr off" aria-label="More"></button>
    </div>
    <div class="group">
      <button class="tb" aria-label="Clear colors"><svg><use href="#sw1"/></svg></button>
      <button class="tb" aria-label="Set levels"><svg><use href="#sw2"/></svg></button>
      <button class="tb" aria-label="Swap"><svg><use href="#swap"/></svg></button>
      <button class="tb" aria-label="Colors"><svg><use href="#sw3"/></svg></button>
      <button class="tb" aria-label="Attributes"><svg><use href="#sw4"/></svg></button>
    </div>
    <div class="group">
      <button class="tb" aria-label="Pocket"><svg><use href="#nest"/></svg></button>
      <button class="tb" aria-label="Contour"><svg><use href="#step"/></svg></button>
      <button class="tb" aria-label="Slot"><svg><use href="#slotm"/></svg></button>
      <button class="tb" aria-label="Drill"><svg><use href="#drillm"/></svg></button>
      <i class="sep"></i>
      <button class="tb" aria-label="Circle mill"><svg><use href="#circm"/></svg></button>
      <button class="tb" aria-label="Thread"><svg><use href="#cylm"/></svg></button>
      <button class="tb" aria-label="Helix"><svg><use href="#helix"/></svg></button>
      <i class="sep"></i>
      <button class="tb" aria-label="Net"><svg><use href="#netm"/></svg></button>
      <button class="tb" aria-label="Expand"><svg><use href="#expand"/></svg></button>
    </div>
  </div>

  <!-- Toolbar row 2: sketch, transform, analyze -->
  <div class="bar">
    <div class="group">
      <button class="tb" aria-label="Point"><svg><use href="#plus"/></svg></button><button class="arr" aria-label="More"></button>
      <button class="tb" aria-label="Line"><svg><use href="#line"/></svg></button><button class="arr" aria-label="More"></button>
      <button class="tb" aria-label="Arc"><svg><use href="#arc"/></svg></button><button class="arr" aria-label="More"></button>
      <button class="tb" aria-label="Rectangle"><svg><use href="#rect"/></svg></button><button class="arr" aria-label="More"></button>
      <button class="tb" aria-label="Fillet"><svg><use href="#fillet"/></svg></button><button class="arr" aria-label="More"></button>
      <button class="tb" aria-label="Spline"><svg><use href="#spline"/></svg></button><button class="arr" aria-label="More"></button>
      <button class="tb" aria-label="Cylinder"><svg><use href="#cyl"/></svg></button><button class="arr" aria-label="More"></button>
    </div>
    <div class="group">
      <button class="tb" aria-label="Trim"><svg><use href="#trim"/></svg></button>
      <button class="tb" aria-label="Break"><svg><use href="#break"/></svg></button><button class="arr" aria-label="More"></button>
    </div>
    <div class="group">
      <button class="tb" aria-label="Center"><svg><use href="#snapc"/></svg></button>
      <button class="tb" aria-label="Endpoint"><svg><use href="#snape"/></svg></button>
      <button class="tb" aria-label="Intersection"><svg><use href="#snapx"/></svg></button>
      <button class="tb" aria-label="Midpoint"><svg><use href="#snapm"/></svg></button>
    </div>
    <div class="group">
      <button class="tb" aria-label="Translate"><svg><use href="#xf1"/></svg></button>
      <button class="tb" aria-label="Rotate"><svg><use href="#xf2"/></svg></button>
      <button class="tb" aria-label="Mirror"><svg><use href="#xf3"/></svg></button>
      <button class="tb" aria-label="Scale"><svg><use href="#xf4"/></svg></button>
      <i class="sep"></i>
      <button class="tb" aria-label="Offset"><svg><use href="#xf5"/></svg></button>
      <button class="tb" aria-label="Offset contour"><svg><use href="#xf6"/></svg></button>
      <button class="tb" aria-label="Project"><svg><use href="#xf7"/></svg></button>
    </div>
    <div class="group">
      <button class="tb" aria-label="Dynamic view"><svg><use href="#dgl"/></svg></button>
      <button class="tb" aria-label="Dynamic line"><svg><use href="#dln"/></svg></button>
      <button class="tb" aria-label="Dynamic circle"><svg><use href="#dci"/></svg></button>
      <button class="tb" aria-label="Dynamic spline"><svg><use href="#dsp"/></svg></button>
      <button class="tb" aria-label="Dynamic surface"><svg><use href="#dsu"/></svg></button>
      <button class="tb" aria-label="Dynamic mesh"><svg><use href="#dgr"/></svg></button>
    </div>
    <div class="group">
      <button class="tb" aria-label="Analyze entity"><svg><use href="#q1"/></svg></button>
      <button class="tb" aria-label="Analyze angle"><svg><use href="#q2"/></svg></button>
      <button class="tb" aria-label="Analyze dynamic"><svg><use href="#q3"/></svg></button>
      <button class="tb" aria-label="Analyze chain"><svg><use href="#q4"/></svg></button>
    </div>
    <div class="group">
      <button class="tb" aria-label="Net surface"><svg><use href="#og1"/></svg></button>
      <button class="tb" aria-label="Ruled surface"><svg><use href="#og2"/></svg></button>
      <button class="tb" aria-label="Revolved surface"><svg><use href="#og3"/></svg></button>
      <button class="tb" aria-label="Swept surface"><svg><use href="#og4"/></svg></button>
      <i class="sep"></i>
      <button class="tb" aria-label="Trim surface"><svg><use href="#og5"/></svg></button><button class="arr" aria-label="More"></button>
      <i class="sep"></i>
      <button class="tb" aria-label="Flow"><svg><use href="#mc1"/></svg></button>
      <button class="tb" aria-label="Rough"><svg><use href="#mc2"/></svg></button>
      <button class="tb" aria-label="Stock box"><svg><use href="#wirebox"/></svg></button>
      <i class="sep"></i>
      <button class="tb" aria-label="Multiaxis"><svg><use href="#rot"/></svg></button><button class="arr" aria-label="More"></button>
      <button class="tb" aria-label="Machine"><svg><use href="#mill"/></svg></button><button class="arr" aria-label="More"></button>
    </div>
  </div>

  <!-- Coordinate and selection ribbon -->
  <div class="bar ribbon">
    <div class="coords">
      <button class="key" id="kx"><u>X</u></button>
      <span class="combo dim"><input type="text" value="-81.85627" aria-labelledby="kx"><button aria-label="X list"><svg><use href="#chev"/></svg></button></span>
      <button class="key" id="ky"><u>Y</u></button>
      <span class="combo dim"><input type="text" value="12.46085" aria-labelledby="ky"><button aria-label="Y list"><svg><use href="#chev"/></svg></button></span>
      <button class="key" id="kz"><u>Z</u></button>
      <span class="combo dim"><input type="text" value="0.0" aria-labelledby="kz"><button aria-label="Z list"><svg><use href="#chev"/></svg></button></span>
      <button class="tb wide" aria-label="Fast point"><svg><use href="#boltg"/></svg></button>
      <button class="tb" aria-label="Override"><svg><use href="#bang"/></svg></button>
      <button class="tb big" aria-label="AutoCursor"><svg><use href="#clock"/></svg></button>
      <button class="arr off" aria-label="More"></button>
      <button class="framed" aria-label="Help"><svg><use href="#help"/></svg></button>
    </div>
    <div class="select-tools">
      <i class="grip"></i>
      <button class="xp">全部...</button>
      <button class="xp">單一...</button>
      <button class="framed" aria-label="Pick"><svg><use href="#bcursor"/></svg></button>
      <select class="range" aria-label="Selection range"><option>範圍內</option></select>
      <button class="tb" aria-label="Window"><svg><use href="#dash"/></svg></button><button class="arr" aria-label="More"></button>
      <button class="tb" aria-label="Cursor"><svg class="l"><use href="#gcur"/></svg></button>
      <button class="tb flat" aria-label="Solid body"><svg><use href="#gcube"/></svg></button>
      <button class="tb flat gap" aria-label="Face"><svg><use href="#ghex"/></svg></button>
      <button class="tb flat" aria-label="Edge"><svg><use href="#ghex"/></svg></button>
      <button class="tb flat" aria-label="Vertex"><svg><use href="#ghex"/></svg></button>
      <button class="tb flat gap" aria-label="Back face"><svg><use href="#gwire"/></svg></button>
      <button class="tb flat" aria-label="Last"><svg><use href="#gup"/></svg></button>
      <button class="framed gap" aria-label="Verify"><svg><use href="#vcur"/></svg></button>
      <button class="tb flat gap" aria-label="Cancel"><svg><use href="#gno"/></svg></button>
      <button class="tb big" aria-label="End"><svg><use href="#gdot"/></svg></button>
      <button class="framed gap" aria-label="Help"><svg><use href="#help"/></svg></button>
    </div>
  </div>

  <main class="work">
    <aside class="manager">
      <div class="caption">
        <h2>刀具操作管理器</h2>
        <button aria-label="Menu"><i class="tri"></i></button>
        <button>X</button>
      </div>
      <div class="tabs">
        <button class="tab active">刀具路徑</button>
        <button class="tab">實體管理器</button>
      </div>
      <div class="ops">
        <div class="oprow">
          <button class="tb" aria-label="Select all"><svg><use href="#ck"/></svg></button>
          <button class="tb" aria-label="Select dirty"><svg><use href="#ckx"/></svg></button>
          <i class="sep"></i>
          <button class="tb" aria-label="Regenerate all"><svg><use href="#tp"/></svg></button>
          <button class="tb" aria-label="Regenerate dirty"><svg><use href="#tx"/></svg></button>
          <i class="sep"></i>
          <button class="tb" aria-label="Backplot"><svg><use href="#sq"/></svg></button>
          <button class="tb" aria-label="Verify"><svg><use href="#blob"/></svg></button>
          <button class="tb g1">G1</button>
          <button class="tb" aria-label="High feed"><svg><use href="#ta"/></svg></button>
          <i class="sep"></i>
          <button class="tb" aria-label="Delete operations"><svg><use href="#magic"/></svg></button>
        </div>
        <div class="oprow">
          <button class="tb" aria-label="Lock"><svg><use href="#lock"/></svg></button>
          <button class="tb" aria-label="Toggle display"><svg><use href="#waves"/></svg></button>
          <button class="tb" aria-label="Toggle posting"><svg><use href="#lock2"/></svg></button>
          <i class="sep"></i>
          <button class="tb" aria-label="Down"><svg><use href="#dn"/></svg></button>
          <button class="tb" aria-label="Up"><svg><use href="#up"/></svg></button>
          <button class="tb" aria-label="Position"><svg><use href="#loop"/></svg></button>
          <button class="tb" aria-label="Scroll"><svg><use href="#ud"/></svg></button>
          <i class="sep"></i>
          <button class="tb" aria-label="Only selected"><svg><use href="#wavex"/></svg></button>
          <button class="tb" aria-label="Only geometry"><svg><use href="#rings"/></svg></button>
        </div>
      </div>
      <div class="tree">
        <ul>
          <li><span class="node"><i class="box">−</i><svg><use href="#tgroup"/></svg><b>Machine Group-1</b></span>
            <ul>
              <li><span class="node"><i class="box">+</i><i class="dots"></i><svg><use href="#tprop"/></svg>屬性 - Mill Default MM</span></li>
              <li><span class="node"><i class="elbow"></i><svg><use href="#tplay"/></svg></span></li>
            </ul>
          </li>
        </ul>
        <div class="scroll">
          <button aria-label="Scroll left"><svg><use href="#lt"/></svg></button>
          <i class="thumb"></i>
          <button aria-label="Scroll right"><svg><use href="#gt"/></svg></button>
        </div>
      </div>
    </aside>

    <div class="side">
      <div class="sidegroup">
        <div><button class="tb" aria-label="Extrude"><svg><use href="#s1"/></svg></button></div>
        <div><button class="tb" aria-label="Revolve"><svg><use href="#s2"/></svg></button></div>
        <div><button class="tb" aria-label="Sweep"><svg><use href="#s3"/></svg></button></div>
        <div><button class="tb" aria-label="Loft"><svg><use href="#s4"/></svg></button></div>
        <div><button class="tb" aria-label="Solid fillet"><svg><use href="#s5"/></svg></button><button class="arr" aria-label="More"></button></div>
        <hr>
        <div><button class="tb" aria-label="Shell"><svg><use href="#s6"/></svg></button></div>
        <div><button class="tb" aria-label="Boolean"><svg><use href="#s7"/></svg></button><button class="arr" aria-label="More"></button></div>
        <div><button class="tb" aria-label="Chamfer"><svg><use href="#s8"/></svg></button></div>
        <div><button class="tb" aria-label="Solid trim"><svg><use href="#s9"/></svg></button></div>
        <div class="bar-end"><button class="tb" aria-label="Thicken"><svg><use href="#s10"/></svg></button></div>
        <hr>
        <div><button class="tb" aria-label="Remove faces"><svg><use href="#s11"/></svg></button></div>
        <div><button class="tb" aria-label="Draft"><svg><use href="#s12"/></svg></button></div>
        <div><button class="tb" aria-label="From surfaces"><svg><use href="#s13"/></svg></button></div>
        <div class="bar-end"><button class="tb" aria-label="Layout"><svg><use href="#s14"/></svg></button></div>
        <hr>
        <div><button class="tb" aria-label="Primitives"><svg><use href="#s15"/></svg></button><button class="arr" aria-label="More"></button></div>
        <div><button class="tb" aria-label="Push-pull"><svg><use href="#s16"/></svg></button><button class="arr" aria-label="More"></button></div>
      </div>
      <div class="sidegroup narrow">
        <div><button class="tb" aria-label="Open recent"><svg><use href="#open"/></svg></button></div>
        <div><button class="tb" aria-label="Iso"><svg><use href="#cube"/></svg></button></div>
        <div><button class="tb" aria-label="Recent attributes"><svg><use href="#sw4"/></svg></button></div>
        <div><button class="tb" aria-label="Recent window"><svg><use href="#dash"/></svg></button></div>
        <div><button class="tb" aria-label="Save some"><svg><use href="#half"/></svg></button></div>
        <div><button class="tb" aria-label="Configure"><svg><use href="#wr"/></svg></button></div>
      </div>
    </div>

    <!-- Graphics window -->
    <section class="viewport">
      <svg viewBox="283 139 995 524" preserveAspectRatio="xMidYMid slice">
        <defs>
          <linearGradient id="flange" x1="433" y1="360" x2="1075" y2="460" gradientUnits="userSpaceOnUse">
            <stop offset="0" stop-color="#7a5c7a"/><stop offset=".35" stop-color="#745872"/><stop offset=".7" stop-color="#7c5e7c"/><stop offset=".85" stop-color="#755773"/><stop offset="1" stop-color="#6c5069"/>
          </linearGradient>
          <pattern id="gridDots" x="3" width="6" height="6" patternUnits="userSpaceOnUse"><rect width="1" height="1" fill="#999"/><rect x="3" y="3" width="1" height="1" fill="#666"/></pattern>
          <filter id="soft" x="-20%" y="-20%" width="140%" height="140%"><feGaussianBlur stdDeviation="5"/></filter>
          <clipPath id="bodyClip"><use href="#bodyShape"/></clipPath>
        </defs>
        <rect x="283" y="139" width="995" height="524" fill="#000"/>
        <!-- datum axes behind the part -->
        <g stroke="#80501c" fill="none">
          <path d="M321 139L575 286M345 661L673 471M783.500 536V663"/>
          <path d="M920 327L1246 139M1010 537L1230 663" stroke-width="2"/>
        </g>
        <path id="bodyShape" d="M432 358Q433 350 455 338L510 308Q555 284 600 269L660 248Q690 238 718 241Q735 244 748 251L764 256Q790 260 806 270V274Q790 282 796 287Q806 292 818 287Q822 284 821 279H824L870 301L920 327L960 352L988 373L987 376Q971 383 976 390Q986 396 998 391Q1002 388 1000 385H1004Q1018 390 1026 401Q1034 414 1048 423Q1062 434 1069 446Q1077 458 1074 468Q1070 480 1050 497L1010 538Q975 570 940 593Q910 612 893 620Q885 623 878 619L862 604Q846 591 834 584Q824 584 820 580L816 562Q815 556 810 552L740 507L678 470L512 380L507 385L503 399L499 400L492 390Q480 376 465 371L438 364Q432 362 432 358Z" fill="url(#flange)" stroke="#4e3a4e"/>
        <g clip-path="url(#bodyClip)">
          <path d="M500 384L620 332Q690 300 760 287Q790 288 820 303L950 378Q978 400 972 430" fill="none" stroke="#9474a0" stroke-width="12" opacity=".5" filter="url(#soft)"/>
          <path d="M700 241Q770 252 800 275L830 288L980 378L1010 400" fill="none" stroke="#8c6a90" stroke-width="18" opacity=".35" filter="url(#soft)"/>
          <path d="M900 610Q1000 560 1070 470" fill="none" stroke="#664a66" stroke-width="24" opacity=".4" filter="url(#soft)"/>
        </g>
        <!-- recessed plate -->
        <path d="M512 378L620 331L672 311Q700 301 735 294Q760 291 783 296Q800 300 812 308L890 351L940 379Q967 393 968 425Q968 440 955 454L927 487L823 578L817 562L812 553L740 507L678 470Z" fill="#735670"/>
        <path d="M961 405Q973 430 952 454L927 487L823 578L817 556L897 490Q950 452 958 425Z" fill="#7b5d7c"/>
        <path d="M823 578L927 487L955 454Q969 438 967 418Q966 397 948 385" fill="none" stroke="#5c455c"/>
        <path d="M512 378L620 331M672 311Q700 301 735 294Q760 291 783 296Q800 300 812 308L890 351L940 379" fill="none" stroke="#4c384c"/>
        <path d="M668 322L672 311L705 305L712 313Z" fill="#80627f"/>
        <path d="M817 556L897 487L940 452" fill="none" stroke="#84668a" opacity=".6"/>
        <!-- rim lines -->
        <g fill="none" stroke="#9876a0">
          <path d="M453 346Q510 312 570 286Q640 256 690 245Q720 242 745 254Q775 260 800 273M824 283L985 377M1003 389Q1018 396 1028 411Q1046 424 1060 446Q1070 460 1064 470"/>
          <path d="M456 342Q520 308 585 282L660 254M826 281L986 374M906 602Q960 576 1005 537" opacity=".6"/>
          <path d="M824 286L980 377M1006 388Q1030 404 1034 414Q1058 430 1070 456" stroke="#5c4460"/>
          <path d="M901 599l-3 3 3 4h2" stroke="#a898a8"/>
        </g>
        <path d="M472 338h1M501 321h1M545 300h1M573 288h1M622 269h1M664 255h1M693 246h1M726 251h1M453 366h1M482 378h1M835 321h1M848 328h1M866 338h1M890 352h1M950 391h1M956 419h1M952 428h1M916 467h1M897 483h1M866 510h1M861 514h1M843 529h1M1044 433h1M1040 505h1M1023 521h1M907 609h1M844 587h1M930 454l8-8" stroke="#1c101c" stroke-width="1.500"/>
        <!-- openings -->
        <g fill="#000">
          <path d="M621 330C619 308 655 305 664 317L667 324L707 313H715L938 443L868 484L630 347L646 338L629 327Z"/>
          <ellipse cx="619" cy="388" rx="15" ry="7"/>
          <ellipse cx="799" cy="492" rx="15" ry="7"/>
        </g>
        <path d="M605 384Q619 375 633 384M785 488Q799 479 813 488" fill="none" stroke="#94749a"/>
        <!-- construction grid -->
        <path d="M784 372L843 406L786 439L728 404Z" fill="url(#gridDots)" stroke="#b0b0b0" stroke-dasharray="6 5"/>
        <g stroke="#8a5418" fill="none">
          <path d="M575 286L602 301" opacity=".7"/>
          <path d="M628 316L784 406L757 421M783.500 406V437"/>
          <path d="M784 139V406M830 380L784 406L893 469M920 485L937 494M965 510L1012 538" stroke-width="2"/>
        </g>
        <!-- toolpath contours -->
        <g fill="none" stroke="#e41818">
          <path d="M437 343L505 306Q560 280 615 263L660 246"/>
          <path d="M430 369Q455 374 472 382Q482 387 490 398Q497 405 501 398L503 388Q505 382 510 386"/>
          <path d="M515 389Q590 425 662 470L740 517L803 555Q809 558 810 567L811 580Q813 588 822 588Q832 587 842 595L868 621"/>
          <path d="M510 381L678 470L740 507L812 553Q816 560 818 572Q820 581 826 583H836M864 606L878 618M940 592L925 601M1072 474L1066 481M797 280L804 276M975 387L980 380"/>
        </g>
        <!-- gnomon -->
        <path d="M324.500 624V608" stroke="#1414e0"/><path d="M324 624L338 616" stroke="#189018"/><path d="M324 624L338 632" stroke="#f01010"/>
        <g class="vt"><text x="320" y="602" fill="#1010e8">Z</text><text x="341" y="614" fill="#109010">Y</text><text x="341" y="638" fill="#f01010">X</text></g>
        <g class="vt" fill="#c0c0c0"><text x="291" y="652">屏幕視角:等檢視</text><text x="399" y="652">WCS:俯檢視</text><text x="481" y="652">刀具/繪圖平面:俯檢視</text><text x="1182" y="651">公制</text></g>
        <text class="vt" x="1185" y="635" fill="#e81c1c">22.664</text>
        <path d="M1158.500 627V652M1254.500 628V652M1159 639.500H1254" stroke="#f0f080"/>
      </svg>
    </section>
  </main>

  <footer class="status">
    <span class="hint">說明,按 Alt+H。</span>
    <button class="sbtn">3D</button>
    <button class="sbtn">屏幕視角</button>
    <button class="sbtn tight">平面</button>
    <label for="zdepth">Z</label>
    <span class="combo yellow"><input id="zdepth" type="text" value="0.0"><button aria-label="Z depths"><svg><use href="#chev"/></svg></button></span>
    <span class="color"><button class="red">12</button><button class="down" aria-label="Colors">▼</button></span>
    <label for="level">層別</label>
    <span class="combo level"><input id="level" type="text" value="5"><button aria-label="Levels"><svg><use href="#chev"/></svg></button></span>
    <button class="sbtn tight">屬性</button>
    <select class="pstyle" aria-label="Point style"><option>＊</option></select>
    <select class="lstyle thick" aria-label="Line style"><option></option></select>
    <select class="lstyle" aria-label="Line width"><option></option></select>
    <button class="sbtn">WCS</button>
    <button class="sbtn">群組組</button>
    <button class="sbtn tight">!</button>
    <button class="sbtn tight">?</button>
  </footer>

  <div class="taskbar">
    <button class="start"><svg><use href="#flag"/></svg>開始</button>
    <button class="task"><svg><use href="#fox"/></svg><span>輕音樂-- 童話 (FL stu...</span></button>
    <button class="task on"><svg><use href="#logo"/></svg><span>Mastercam Mill X6 M...</span></button>
    <button class="task"><svg><use href="#ie"/></svg><span>发表帖子 - MasterCA...</span></button>
    <svg class="kbd"><use href="#kbd"/></svg>
    <div class="tray">
      <svg><use href="#logo"/></svg><svg><use href="#pc"/></svg><svg><use href="#shield"/></svg><svg><use href="#person"/></svg><svg><use href="#person"/></svg><svg><use href="#leaf"/></svg><svg><use href="#leaf"/></svg><svg><use href="#net"/></svg>
      <svg><use href="#vol"/></svg>
      <time>上午 08:11</time>
      <div class="mark">三维网<span>www.3dportal.cn</span></div>
    </div>
  </div>
</body>
</html>
```

FILE: styles.css
```css
* { box-sizing: border-box; }
body {
  margin: 0;
  height: 100vh;
  display: flex;
  flex-direction: column;
  overflow: hidden;
  background: #e0e0e9;
  color: #000;
  font: 12px/16px "Liberation Serif", "Noto Sans CJK TC", serif;
}
button, input, select {
  font: inherit;
  color: inherit;
  margin: 0;
  padding: 0;
  border: 0;
  background: none;
  border-radius: 0;
}
button { display: flex; align-items: center; justify-content: center; white-space: nowrap; }
svg { display: block; flex: none; }
.sprite { position: absolute; }

/* title bar */
.titlebar {
  display: flex;
  align-items: center;
  height: 26px;
  flex: none;
  padding: 0 3px 0 3px;
  gap: 2px;
  border-top: 1px solid #62627c;
  border-bottom: 1px solid #74748c;
  background: linear-gradient(#d0d0e0, #a8a8c0 15%, #c4c4d4 50%, #fff 90%, #e0e0ec);
}
.titlebar .i { width: 15px; height: 16px; }
.titlebar h1 { flex: 1; margin: 0 0 0 8px; font-size: 13px; white-space: pre; }
.win {
  width: 21px;
  height: 21px;
  border: 1px solid #6c6c90;
  border-radius: 3px;
  background: linear-gradient(135deg, #fff, #b4b4d0);
}
.win svg { width: 16px; height: 16px; }
.win-close { background: linear-gradient(135deg, #f09090, #c83838); border-color: #903c50; }

.menubar { display: flex; flex: none; gap: 11px; height: 21px; padding: 2px 8px; border-bottom: 1px solid #9c9ca4; }
.menubar a { color: #000; text-decoration: none; white-space: nowrap; }

/* toolbars */
.bar { display: flex; flex: none; height: 30px; padding-top: 1px; background: #e0e0e9; border-top: 1px solid #fff; }
.group {
  display: flex;
  align-items: center;
  height: 28px;
  padding: 0 3px 1px 11px;
  border-right: 1px solid #8c8c94;
  border-bottom: 1px solid #8c8c94;
  background: linear-gradient(#efeeea, #efeeea) left bottom / 10px 7px no-repeat, linear-gradient(#e6e4e6, #dedee2);
}
.tb { width: 23px; height: 22px; flex: none; }
.tb svg { width: 16px; height: 16px; }
.tb.wide svg { width: 21px; }
.tb.big svg { width: 20px; height: 20px; }
.tb svg.l { width: 18px; height: 18px; }
.arr { width: 13px; height: 22px; flex: none; }
.arr::after { content: ""; border: 3px solid transparent; border-top-color: #000; border-bottom: 0; }
.arr.off::after { border-top-color: #aaa; }
.sep { width: 8px; height: 20px; flex: none; background: linear-gradient(#b4b4bc, #b4b4bc) center / 1px 100% no-repeat; }

.ribbon { height: 32px; padding: 0 0 2px; border-bottom: 1px solid #84848c; }
.coords, .select-tools { display: flex; align-items: center; background: #e2e2e6; font-family: "Liberation Sans", sans-serif; }
.coords { padding-left: 5px; width: 451px; }
.select-tools { border-right: 1px solid #9c9ca4; padding-right: 9px; font-family: "Liberation Serif", "Noto Sans CJK TC", serif; }
.key {
  width: 20px;
  height: 20px;
  border: 1px solid #c8c8c8;
  border-radius: 3px;
  background: #f4f3ee;
}
.combo { display: flex; height: 20px; border: 1px solid #8494b0; background: #fff; font-family: "Liberation Sans", sans-serif; }
.combo input { flex: 1; min-width: 0; width: 10px; padding-left: 2px; }
.combo button { width: 16px; flex: none; border: 1px solid #a4b0c8; background: linear-gradient(#fff, #ccd0e0); }
.combo svg { width: 10px; height: 10px; }
.combo.dim { width: 72px; margin: 0 13px 0 6px; border-color: #c4c4c8; background: #f4f3ee; font-size: 11px; }
.combo.dim button { border-color: #ddd; background: #f0efea; color: #b8b8b8; }
.coords .combo:nth-of-type(3) { margin-right: 7px; }
.framed { width: 21px; height: 21px; border: 1px solid #1c3c6c; border-radius: 3px; background: #f4f4f8; }
.framed svg { width: 18px; height: 18px; }
.coords .framed { margin-left: 4px; }
.grip { width: 4px; height: 24px; margin-right: 8px; border: 1px solid #a8a8b0; border-width: 0 1px; background: #fff; }
.xp {
  width: 45px;
  height: 21px;
  margin-right: 10px;
  border: 1px solid #1c3c6c;
  border-radius: 3px;
  background: linear-gradient(#fff, #e4e2e0);
}
.select-tools { font-size: 12px; }
.range, .pstyle, .lstyle {
  appearance: none;
  border: 1px solid #8494b0;
  background: #fff url('data:image/svg+xml,<svg xmlns="http://www.w3.org/2000/svg" width="15" height="18"><rect x=".5" y=".5" width="14" height="17" fill="%23d8dbe8" stroke="%23a4b0c8"/><path d="M4 7l4 4 4-4" fill="none" stroke="%23222" stroke-width="2"/></svg>') right center no-repeat;
}
.range { width: 72px; height: 20px; margin: 0 10px 0 8px; padding-left: 3px; }
.flat { border-right: 1px solid #f8f8f8; border-bottom: 1px solid #ccc; margin-right: 1px; }
.gap { margin-left: 7px; }

/* operations manager */
.work { display: flex; flex: 1; min-height: 0; border-right: 2px solid #e8e8ee; }
.manager { display: flex; flex-direction: column; width: 238px; flex: none; border-right: 1px solid #9c9ca4; background: #dedee6; }
.caption { display: flex; align-items: center; height: 18px; padding: 0 5px 0 2px; gap: 6px; background: #d6d3ca; }
.caption h2 { flex: 1; margin: 0; font-size: 11px; font-weight: normal; }
.caption button { width: 15px; height: 15px; border: 1px solid #1c3c6c; border-radius: 3px; background: #f4f4f8; }
.tri { border: 4px solid transparent; border-top-color: #000; border-bottom: 0; }
.tabs { display: flex; align-items: flex-end; height: 21px; border-bottom: 1px solid #9c9cac; }
.tab { height: 19px; padding: 0 4px; border: 1px solid #9c9cac; border-bottom: 0; border-radius: 3px 3px 0 0; background: linear-gradient(#fff, #dcdce6); }
.tab.active { height: 21px; padding: 0 7px 0 5px; border-top: 2px solid #f0a020; border-left: 0; background: #fcfcfc; }
.ops { margin: 3px 2px 0 2px; border-right: 1px solid #b4b4bc; background: #ececec; }
.oprow { display: flex; align-items: center; height: 30px; padding-left: 4px; border-top: 1px solid #b0b0b4; }
.oprow .sep { width: 6px; height: 20px; }
.oprow .tb svg { width: 17px; height: 17px; }
.oprow .g1 { color: #98989a; font-weight: bold; font-size: 13px; }
.tree {
  flex: 1;
  min-height: 0;
  display: flex;
  flex-direction: column;
  margin: 7px 4px 4px 3px;
  border: 1px solid #7c90ac;
  background: #fff;
}
.tree ul { flex: 1; list-style: none; margin: 0; padding: 1px 0 0 8px; }
.tree ul ul { padding: 0 0 0 19px; }
.node { display: flex; align-items: center; height: 16px; }
.node svg { width: 16px; height: 16px; margin: 0 4px 0 6px; }
.node b { font-weight: normal; background: #b4b4c4; padding: 0 2px 0 1px; }
.node .box { width: 9px; height: 9px; border: 1px solid #8c8c98; font: 9px/7px "Liberation Sans", sans-serif; text-align: center; }
.node .dots { width: 5px; border-top: 1px dotted #444; }
.node .dots + svg { margin: 0 4px 0 2px; }
.node .elbow { width: 11px; height: 8px; align-self: flex-start; margin-left: 4px; border: 1px dotted #444; border-width: 0 0 1px 1px; }
.node .elbow + svg { margin-left: 0; }
.scroll { display: flex; height: 16px; margin: 1px; background: #eeeef4; }
.scroll button { width: 17px; border: 1px solid #9c9cb4; border-radius: 2px; background: linear-gradient(#fff, #ccccdc); }
.scroll button svg { width: 10px; height: 10px; }
.thumb {
  width: 69%;
  margin-right: auto;
  border: 1px solid #9c9cb4;
  border-radius: 2px;
  background: repeating-linear-gradient(90deg, #888 0 1px, transparent 1px 2px) center / 8px 7px no-repeat, linear-gradient(#fdfdff, #ccccdc);
}

/* solids toolbar */
.side { width: 45px; flex: none; display: flex; flex-direction: column; overflow: hidden; border-left: 1px solid #fff; background: #e0e0e9; }
.sidegroup { padding: 12px 0 4px 3px; border-bottom: 1px solid #9c9ca4; }
.sidegroup div { display: flex; height: 22px; width: 28px; }
.sidegroup div:has(.arr) { width: 38px; }
.sidegroup hr { height: 1px; margin: 3px 6px 4px 2px; border: 0; background: #8c8c94; }
.sidegroup .bar-end { border-right: 1px solid #b8b8c0; }
.narrow { width: 30px; flex: 1; min-height: 0; overflow: hidden; padding-top: 10px; border-right: 1px solid #fff; }

.viewport { flex: 1; min-width: 0; background: #000; }
.viewport svg { width: 100%; height: 100%; }
.vt { font: bold 13px "Liberation Serif", "Noto Sans CJK TC", serif; }

/* status bar */
.status { display: flex; flex: none; align-items: center; height: 28px; padding: 0 0 0 2px; gap: 6px; overflow: hidden; border-top: 2px solid #a4a4ac; border-bottom: 1px solid #c0c0c8; background: #e0dfe3; }
.hint { flex: 1; white-space: nowrap; }
.sbtn { height: 20px; flex: none; padding: 0 5px; border: 1px solid #ccc; border-radius: 3px; background: #efeeea; }
.sbtn.tight { padding: 0 2px; }
.combo.yellow { width: 83px; }
.combo.yellow input { background: linear-gradient(90deg, #b0b0c4 18px, #ffff9c 18px); }
.combo.level { width: 100px; }
.color { display: flex; height: 18px; }
.red { width: 34px; background: #f80000; color: #500; }
.down { width: 16px; background: #f4f4f0; }
.pstyle { width: 37px; height: 22px; }
.lstyle { width: 70px; height: 22px; padding: 0; }
.lstyle { background-image: linear-gradient(#000, #000), url('data:image/svg+xml,<svg xmlns="http://www.w3.org/2000/svg" width="15" height="20"><rect x=".5" y=".5" width="14" height="19" fill="%23d8dbe8" stroke="%23a4b0c8"/><path d="M4 8l4 4 4-4" fill="none" stroke="%23222" stroke-width="2"/></svg>'); background-size: 49px 1px, 15px 20px; background-position: 2px center, right center; }
.lstyle.thick { background-size: 49px 3px, 15px 20px; }

/* taskbar */
.taskbar { display: flex; flex: none; align-items: stretch; height: 29px; gap: 2px; background: linear-gradient(#787894, #b0b0c8 8%, #9c9cb8 20%, #d8d8e4 55%, #eeeef4 80%, #a0a0bc); }
.start {
  width: 98px;
  margin-right: 7px;
  gap: 6px;
  padding: 0 12px 4px 0;
  border-radius: 0 10px 12px 0;
  background: linear-gradient(#2c7c1c, #84cc6c 12%, #3c9c2c 35%, #48b038 75%, #28741c);
  color: #fff;
  font: italic 18px/24px "Noto Sans CJK TC", sans-serif;
  text-shadow: 1px 1px 1px #1c4c14;
}
.start svg { width: 19px; height: 19px; }
.task {
  width: 158px;
  height: 25px;
  margin-top: 2px;
  padding: 0 8px;
  gap: 5px;
  justify-content: flex-start;
  border: 1px solid #84849c;
  border-radius: 3px;
  background: linear-gradient(#fff, #d4d4e2);
  color: #222;
}
.task svg { width: 15px; height: 15px; }
.task.on { background: linear-gradient(#5c6074, #7c8094); color: #fff; }
.kbd { width: 16px; height: 16px; margin: 6px 19px 0 auto; }
.tray { position: relative; display: flex; align-items: center; width: 280px; flex: none; padding-left: 9px; gap: 3px; border-left: 1px solid #74748c; background: linear-gradient(#fff, #d4d4e4 60%, #a8a8c4); }
.tray svg { width: 15px; height: 15px; }
.tray time { margin: 0 15px 0 auto; }
.mark {
  position: absolute;
  left: 60px;
  top: 3px;
  display: flex;
  align-items: center;
  color: #fff;
  font: bold 17px/22px "Noto Sans CJK SC", sans-serif;
  -webkit-text-stroke: 2px #f03c3c;
  paint-order: stroke fill;
}
.mark span { font: 18px/22px "DejaVu Sans", sans-serif; }
```
